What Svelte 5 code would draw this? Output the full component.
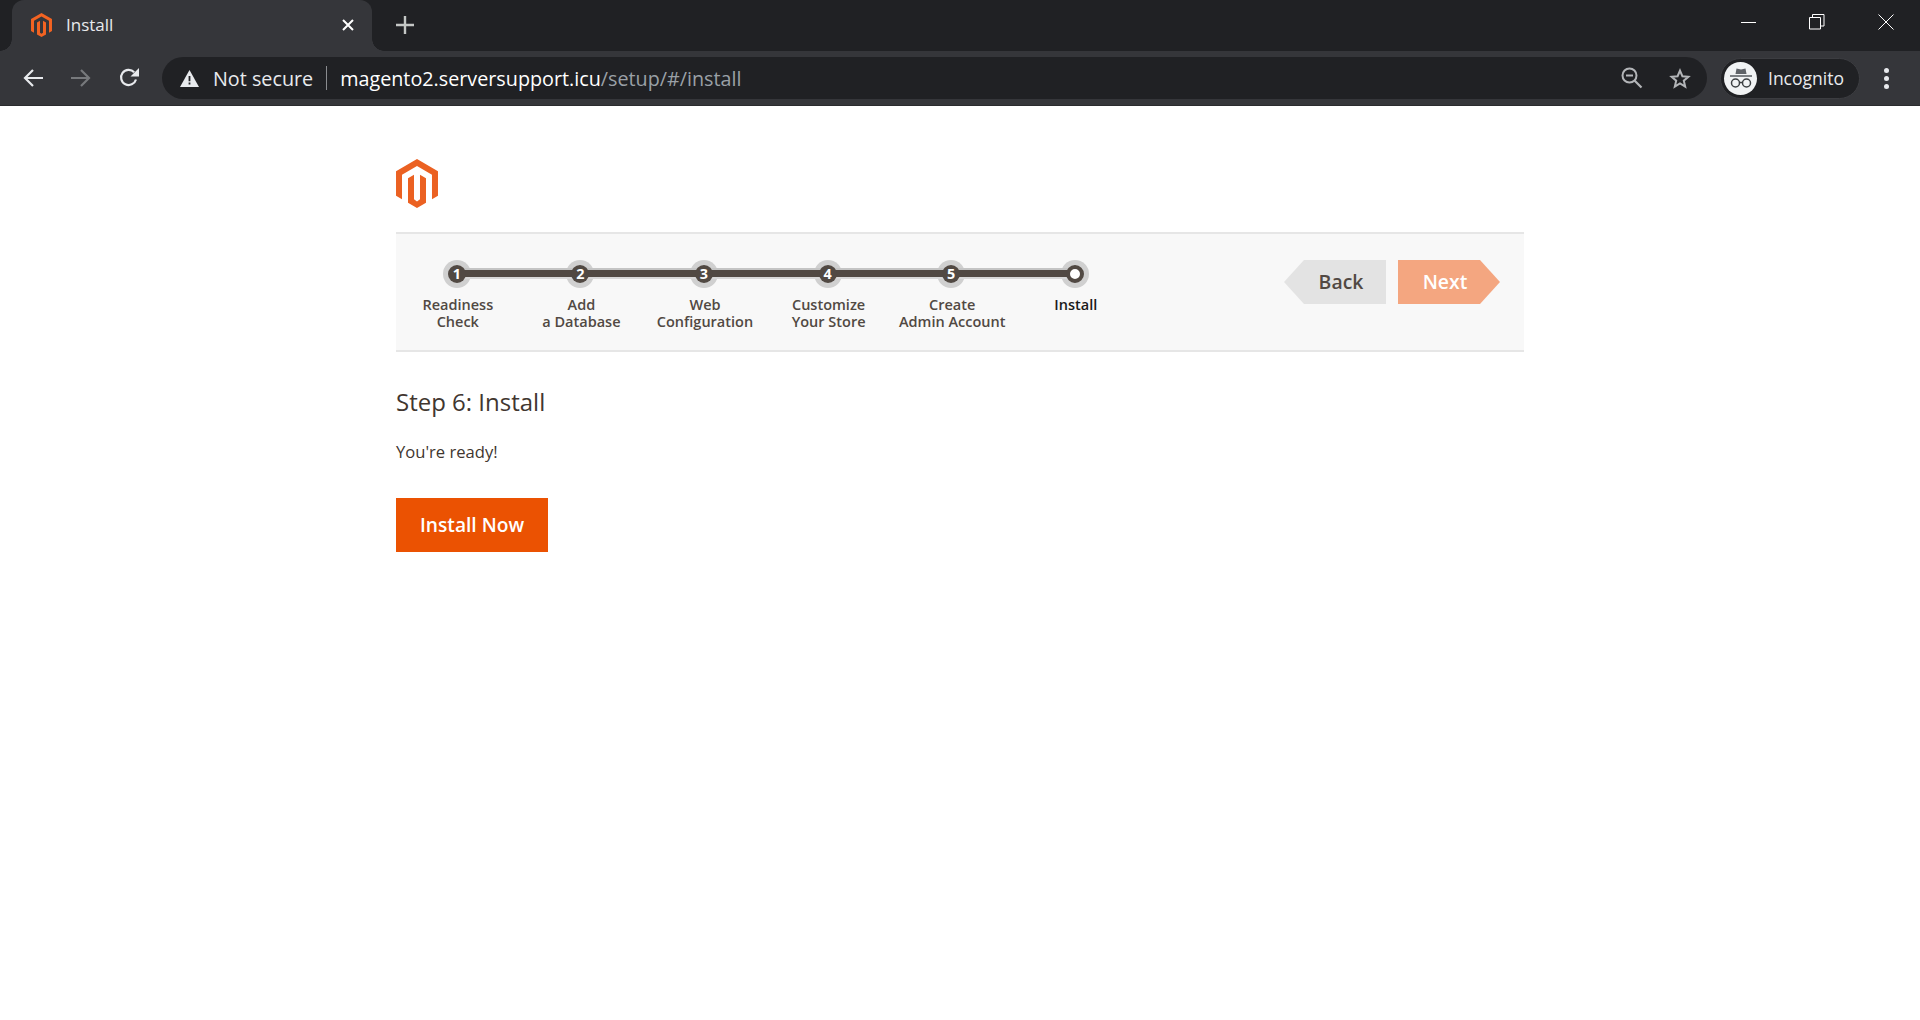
<script>
  const steps = [
    { n: 1, label: ["Readiness", "Check"] },
    { n: 2, label: ["Add", "a Database"] },
    { n: 3, label: ["Web", "Configuration"] },
    { n: 4, label: ["Customize", "Your Store"] },
    { n: 5, label: ["Create", "Admin Account"] },
    { n: 6, label: ["Install"], active: true },
  ];
  const logo = "M12 24l-4.455-2.572v-12l2.97-1.715v12.001L12 20.856l1.485-1.142V7.713l2.971 1.715v12L12 24zM22.391 6v12l-2.969 1.714V7.713L12 3.43 4.574 7.713v12L1.609 18V6L12 0l10.391 6z";
</script>

<div class="browser">
  <div class="tabstrip">
    <div class="tab">
      <svg class="favicon" width="21" height="24" viewBox="1.6 0 20.8 24" preserveAspectRatio="none"><path d={logo} fill="#f26322" /></svg>
      <span class="tab-title">Install</span>
      <svg class="tab-close" width="12" height="12" viewBox="0 0 12 12"><path d="M1 1 11 11M11 1 1 11" stroke="#fff" stroke-width="2" /></svg>
    </div>
    <svg class="newtab" width="18" height="18" viewBox="0 0 18 18"><path d="M9 0V18M0 9H18" stroke="#c4c7c5" stroke-width="2.4" /></svg>
    <div class="winctl">
      <svg width="16" height="16" viewBox="0 0 16 16"><path d="M1 8.5H16" stroke="#fff" /></svg>
      <svg width="16" height="16" viewBox="0 0 16 16"><path d="M.5 3.5H11.5V15H.5ZM3.5 3V.5H15V12H12" stroke="#fff" fill="none" /></svg>
      <svg width="16" height="16" viewBox="0 0 16 16"><path d="M.5.5 15.5 15.5M15.5.5 .5 15.5" stroke="#fff" /></svg>
    </div>
  </div>

  <div class="toolbar">
    <div class="navbtns">
      <svg width="20" height="20" viewBox="0 0 20 20"><path d="M20 10H2M10 2 2 10 10 18" stroke="#e8eaed" stroke-width="2.2" fill="none" /></svg>
      <svg width="20" height="20" viewBox="0 0 20 20"><path d="M0 10H18M10 2 18 10 10 18" stroke="#77797c" stroke-width="2.2" fill="none" /></svg>
      <svg width="20" height="20" viewBox="0 0 20 20"><path d="M17 11.5A7.6 7.6 0 1 1 15.2 4.2" stroke="#e8eaed" stroke-width="2.2" fill="none" /><path d="M20 0V8.5H11.5Z" fill="#e8eaed" /></svg>
    </div>
    <div class="omnibox">
      <svg class="warn" width="19" height="17" viewBox="0 0 19 17"><path d="M9.5 0 19 17H0Z" fill="#e8eaed" /><path d="M8.6 6H10.4V11.2H8.6ZM8.6 12.6H10.4V14.4H8.6Z" fill="#202124" /></svg>
      <span class="secure">Not secure</span>
      <span class="sep"></span>
      <span class="url">magento2.serversupport.icu<span class="path">/setup/#/install</span></span>
      <svg class="zoom-ic" width="22" height="22" viewBox="0 0 22 22"><circle cx="8.5" cy="8.5" r="7" stroke="#b3b5b8" stroke-width="2" fill="none" /><path d="M13.5 13.5 20.5 20.5" stroke="#b3b5b8" stroke-width="2.2" /><path d="M5 8.5H12" stroke="#b3b5b8" stroke-width="2" /></svg>
      <svg class="star" width="22" height="21" viewBox="0 0 22 21"><path d="M11 2.6 13.4 8.2 19.4 8.7 14.8 12.7 16.2 18.6 11 15.5 5.8 18.6 7.2 12.7 2.6 8.7 8.6 8.2Z" stroke="#b3b5b8" stroke-width="2" fill="none" /></svg>
    </div>
    <div class="profile">
      <span class="avatar">
        <svg width="24" height="22" viewBox="0 0 24 22">
          <path d="M6.5 7 7.5 1.5 12 2.5 16.5 1.5 17.5 7Z" fill="#5f6368" />
          <path d="M1 9H23" stroke="#5f6368" stroke-width="1.6" />
          <circle cx="6.5" cy="16" r="4" stroke="#3c4043" stroke-width="1.5" fill="none" />
          <circle cx="17.5" cy="16" r="4" stroke="#3c4043" stroke-width="1.5" fill="none" />
          <path d="M10.5 15.5H13.5" stroke="#3c4043" stroke-width="1.5" />
        </svg>
      </span>
      <span class="profile-name">Incognito</span>
    </div>
    <div class="menu"><i></i><i></i><i></i></div>
  </div>
</div>

<main class="page">
  <svg class="logo" width="42" height="49" viewBox="1.6 0 20.8 24" preserveAspectRatio="none"><path d={logo} fill="#eb6122" /></svg>

  <nav class="nav-bar">
    <ol class="steps">
      {#each steps as step}
        <li class="step" class:active={step.active}>
          <span class="dot">{#if !step.active}{step.n}{/if}</span>
          <span class="label">{#each step.label as line}<span>{line}</span>{/each}</span>
        </li>
      {/each}
    </ol>
    <div class="nav-btns">
      <button class="btn-back">Back</button>
      <button class="btn-next">Next</button>
    </div>
  </nav>

  <h2>Step 6: Install</h2>
  <p>You're ready!</p>
  <button class="btn-install">Install Now</button>
</main>

<style>
  :global(body) {
    margin: 0;
    background: #fff;
    font-family: "Open Sans", sans-serif;
  }

  .browser {
    color: #e8eaed;
    height: 106px;
  }

  .tabstrip {
    display: flex;
    align-items: center;
    height: 51px;
    padding-left: 12px;
    background: #202124;
  }

  .tab {
    position: relative;
    display: flex;
    align-items: center;
    box-sizing: border-box;
    width: 360px;
    height: 51px;
    padding: 0 18px 2px 19px;
    background: #35363a;
    border-radius: 12px 12px 0 0;
  }

  .tab::before,
  .tab::after {
    content: "";
    position: absolute;
    bottom: 0;
    width: 12px;
    height: 12px;
  }

  .tab::before {
    left: -12px;
    background: radial-gradient(circle at 0 0, #202124 11.5px, #35363a 12px);
  }

  .tab::after {
    right: -12px;
    background: radial-gradient(circle at 100% 0, #202124 11.5px, #35363a 12px);
  }

  .favicon {
    margin-right: 14px;
  }

  .tab-title {
    flex: 1;
    font-size: 17px;
    color: #e8eaed;
  }

  .newtab {
    margin: -2px 0 0 24px;
  }

  .winctl {
    display: flex;
    gap: 53px;
    margin-left: auto;
    padding-right: 26px;
    margin-top: -8px;
  }

  .toolbar {
    display: flex;
    align-items: center;
    height: 55px;
    background: #35363a;
    border-bottom: 1px solid #2a2b2e;
    box-sizing: border-box;
  }

  .navbtns {
    display: flex;
    gap: 28px;
    padding-left: 23px;
    margin-right: 23px;
  }

  .omnibox {
    display: flex;
    align-items: center;
    flex: none;
    width: 1545px;
    height: 42px;
    box-sizing: border-box;
    padding: 0 16px 0 18px;
    background: #202124;
    border-radius: 21px;
    font-size: 19.75px;
  }

  .secure {
    margin-left: 14px;
    color: #e8eaed;
  }

  .sep {
    width: 1px;
    height: 24px;
    margin: 0 13px;
    background: #8a8c8f;
  }

  .url {
    flex: 1;
    color: #fff;
  }

  .path {
    color: #9aa0a6;
  }

  .star {
    margin-left: 26px;
  }

  .profile {
    display: flex;
    align-items: center;
    box-sizing: border-box;
    flex: none;
    width: 140px;
    height: 41px;
    margin-left: 13px;
    padding-left: 3px;
    background: #202124;
    border: 1px solid #3c3d41;
    border-radius: 21px;
  }

  .avatar {
    display: flex;
    align-items: center;
    justify-content: center;
    width: 33px;
    height: 33px;
    border-radius: 50%;
    background: #f1f3f4;
  }

  .profile-name {
    margin-left: 11px;
    font-size: 17.5px;
    color: #e8eaed;
  }

  .menu {
    display: flex;
    flex-direction: column;
    gap: 3px;
    margin-left: 24px;
  }

  .menu i {
    width: 5px;
    height: 5px;
    border-radius: 50%;
    background: #e8eaed;
  }

  .page {
    width: 1128px;
    margin-left: 396px;
    padding-top: 53px;
    color: #41362f;
  }

  .logo {
    display: block;
  }

  .nav-bar {
    display: flex;
    justify-content: space-between;
    box-sizing: border-box;
    height: 120px;
    margin-top: 24px;
    padding: 27px 24px 0 0;
    background: #f8f8f8;
    border-top: 2px solid #e6e6e6;
    border-bottom: 2px solid #e6e6e6;
  }

  .steps {
    display: flex;
    margin: 0;
    padding: 0;
    list-style: none;
  }

  .step {
    position: relative;
    display: flex;
    flex-direction: column;
    align-items: center;
    width: 123.6px;
  }

  /* grey halo behind the dot */
  .step::before {
    content: "";
    position: absolute;
    top: -1px;
    left: calc(50% - 15px);
    width: 28px;
    height: 28px;
    border-radius: 50%;
    background: #d0d0d0;
  }

  /* connector to the next step, drawn over the halo */
  .step:not(:last-child)::after {
    content: "";
    position: absolute;
    z-index: 1;
    top: 9px;
    left: calc(50% - 1px);
    width: 100%;
    height: 7px;
    background: #514943;
    border-top: 2px solid #c4c4c4;
    border-bottom: 2px solid #d8d8d8;
    margin-top: -2px;
  }

  .dot {
    position: relative;
    z-index: 2;
    box-sizing: border-box;
    width: 18px;
    height: 18px;
    margin: 4px 2px 4px 0;
    border-radius: 50%;
    background: #514943;
    color: #fff;
    font-size: 14.4px;
    font-weight: 700;
    line-height: 18px;
    text-align: center;
  }

  .step.active .dot {
    background: #fff;
    border: 4px solid #514943;
  }

  .label {
    display: flex;
    flex-direction: column;
    align-items: center;
    margin-top: 10px;
    font-size: 14.5px;
    font-weight: 550;
    line-height: 16.8px;
    color: #514943;
    white-space: nowrap;
  }

  .step.active .label {
    font-weight: 600;
    color: #1a1a1a;
  }

  .nav-btns {
    display: flex;
    gap: 12px;
    height: 44px;
    margin-top: -1px;
  }

  button {
    border: 0;
    padding: 0;
    font-family: inherit;
  }

  .btn-back {
    width: 102px;
    height: 44px;
    padding: 0 0 2px 12px;
    background: #e3e3e3;
    color: #514943;
    font-size: 19.4px;
    font-weight: 600;
    clip-path: polygon(20px 0, 100% 0, 100% 100%, 20px 100%, 0 50%);
  }

  .btn-next {
    width: 102px;
    height: 44px;
    padding: 0 8px 2px 0;
    background: #f4a680;
    color: #fff;
    font-size: 19.4px;
    font-weight: 600;
    clip-path: polygon(0 0, calc(100% - 20px) 0, 100% 50%, calc(100% - 20px) 100%, 0 100%);
  }

  h2 {
    margin: 33px 0 0;
    font-size: 24px;
    font-weight: 400;
    line-height: 33px;
    color: #41362f;
  }

  p {
    margin: 22px 0 0;
    font-size: 16.6px;
    line-height: 23px;
    color: #41362f;
  }

  .btn-install {
    display: block;
    width: 152px;
    height: 54px;
    margin-top: 35px;
    padding-bottom: 2px;
    background: #eb5202;
    color: #fff;
    font-size: 19.2px;
    font-weight: 600;
  }
</style>
